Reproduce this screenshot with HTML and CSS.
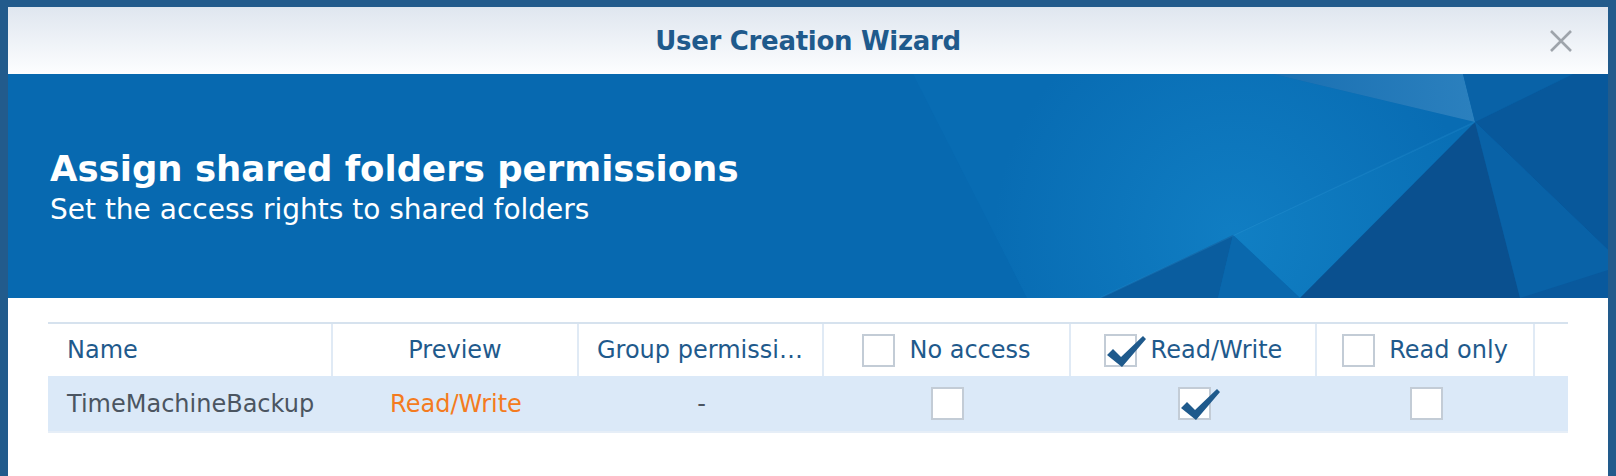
FILE: index.html
```html
<!DOCTYPE html>
<html lang="en">
<head>
    <meta charset="UTF-8">
    <title>User Creation Wizard</title>
    <link rel="stylesheet" href="styles.css">
</head>
<body>
<div class="window">
    <div class="titlebar">
        <span class="title">User Creation Wizard</span>
        <button class="close-button" title="Close">
            <svg width="24" height="24" viewBox="0 0 24 24"><path d="M2 2 L22 22 M22 2 L2 22" stroke="#9ea4ab" stroke-width="2.6" fill="none"/></svg>
        </button>
    </div>

    <div class="banner">
        <svg class="banner-art" viewBox="0 0 1600 224" preserveAspectRatio="none">
            <defs>
                <radialGradient id="glow" gradientUnits="userSpaceOnUse" cx="1225" cy="161" r="240">
                    <stop offset="0" stop-color="#1a93d6" stop-opacity="0.45"/>
                    <stop offset="1" stop-color="#1a93d6" stop-opacity="0"/>
                </radialGradient>
                <linearGradient id="lightTop" x1="0" y1="0" x2="1" y2="0">
                    <stop offset="0" stop-color="#1a70b2"/>
                    <stop offset="1" stop-color="#2b80be"/>
                </linearGradient>
            </defs>
            <!-- soft facets on the right -->
            <polygon points="905,0 1265,0 1467,48 1225,161 1092,224 1019,224" fill="#086cb3"/>
            <polygon points="905,0 1265,0 1467,48 1225,161 1092,224 1019,224" fill="url(#glow)"/>
            <polygon points="1265,0 1455,0 1467,48" fill="url(#lightTop)"/>
            <polygon points="1455,0 1565,0 1467,48" fill="#0962a7"/>
            <polygon points="1565,0 1600,0 1600,176 1467,48" fill="#08589b"/>
            <polygon points="1467,48 1600,176 1600,224 1512,224" fill="#0962a7"/>
            <polygon points="1512,224 1600,224 1600,196" fill="#09599d"/>
            <polygon points="1467,48 1225,161 1292,224" fill="#096fb5"/>
            <polygon points="1467,48 1225,161 1292,224" fill="url(#glow)"/>
            <polygon points="1467,48 1292,224 1512,224" fill="#0a508f"/>
            <polygon points="1092,224 1225,161 1210,224" fill="#0a5d9f"/>
            <polygon points="1225,161 1210,224 1292,224" fill="#0a68ad"/>
            <line x1="1467" y1="48" x2="1092" y2="224" stroke="#3aa3e0" stroke-opacity="0.2" stroke-width="1.5"/>
        </svg>
        <div class="banner-text">
            <h1>Assign shared folders permissions</h1>
            <p>Set the access rights to shared folders</p>
        </div>
    </div>

    <div class="content">
        <div class="perm-grid">
            <div class="cell head left">Name</div>
            <div class="cell head">Preview</div>
            <div class="cell head clip">Group permission</div>
            <div class="cell head"><span class="check"></span>No access</div>
            <div class="cell head"><span class="check checked"><svg viewBox="0 0 44 36"><polygon points="3,21 9,15 17,23 39,2 42,5 18,33" fill="#1f5a8c"/></svg></span>Read/Write</div>
            <div class="cell head"><span class="check"></span>Read only</div>
            <div class="cell head filler"></div>

            <div class="cell row left">TimeMachineBackup</div>
            <div class="cell row orange">Read/Write</div>
            <div class="cell row">-</div>
            <div class="cell row"><span class="check"></span></div>
            <div class="cell row"><span class="check checked"><svg viewBox="0 0 44 36"><polygon points="3,21 9,15 17,23 39,2 42,5 18,33" fill="#1f5a8c"/></svg></span></div>
            <div class="cell row"><span class="check"></span></div>
            <div class="cell row"></div>
        </div>
    </div>
</div>
</body>
</html>
```

FILE: styles.css
```css
:root {
    --frame-blue: #225b8c;
    --title-blue: #1f5a8c;
    --banner-blue: #0769b0;
    --row-bg: #dbe9f8;
    --line-color: #d6e2ee;
    --box-border: #c3ccd6;
    --text-grey: #4b5561;
    --orange: #f47b20;
    --font-main: "DejaVu Sans", Verdana, sans-serif;
}
html, body { height: 100%; }
body {
    margin: 0; padding: 7px 8px 0; box-sizing: border-box; overflow: hidden;
    background-color: var(--frame-blue); font-family: var(--font-main);
}
.window { background: #fff; height: 100%; }

.titlebar {
    height: 67px; display: grid; grid-template-columns: 1fr auto 1fr; align-items: center;
    background: linear-gradient(to bottom, #dfe6ef, #fdfeff);
}
.title { grid-column: 2; color: var(--title-blue); font-weight: 700; font-size: 26px; letter-spacing: -0.3px; }
.close-button {
    grid-column: 3; justify-self: end; margin-right: 35px; padding: 0; border: none;
    background: transparent; width: 24px; height: 24px; cursor: pointer;
}
.close-button svg { display: block; }

.banner { height: 224px; display: grid; background-color: var(--banner-blue); overflow: hidden; }
.banner-art, .banner-text { grid-area: 1 / 1; }
.banner-art { width: 100%; height: 224px; display: block; }
.banner-text { padding: 74px 0 0 42px; color: #fff; }
.banner-text h1 { margin: 0; font-size: 35.5px; line-height: 42px; font-weight: 700; }
.banner-text p { margin: 4px 0 0; font-size: 28px; line-height: 32px; }

.content { padding: 24px 40px 0; }
.perm-grid {
    display: grid; grid-template-columns: 285px 246px 245px 247px 246px 218px 1fr;
    border-top: 2px solid var(--line-color);
}
.cell {
    display: flex; align-items: center; justify-content: center; gap: 14px;
    font-size: 24px; white-space: nowrap; min-width: 0;
}
.cell.left { justify-content: flex-start; padding-left: 19px; }
.head { height: 52px; color: var(--title-blue); border-right: 2px solid #e0eaf5; }
.head.filler { border-right: none; }
.head.clip { display: block; line-height: 52px; text-align: center; padding: 0 18px; overflow: hidden; text-overflow: ellipsis; }
.row { height: 55px; background-color: var(--row-bg); color: var(--text-grey); border-bottom: 2px solid #e6eef7; }
.row.orange { color: var(--orange); }

.check {
    width: 29px; height: 29px; flex: none; border: 2px solid var(--box-border);
    background: #fff; position: relative;
}
.check.checked svg { position: absolute; left: -2px; top: -2px; width: 44px; height: 36px; overflow: visible; }
```
